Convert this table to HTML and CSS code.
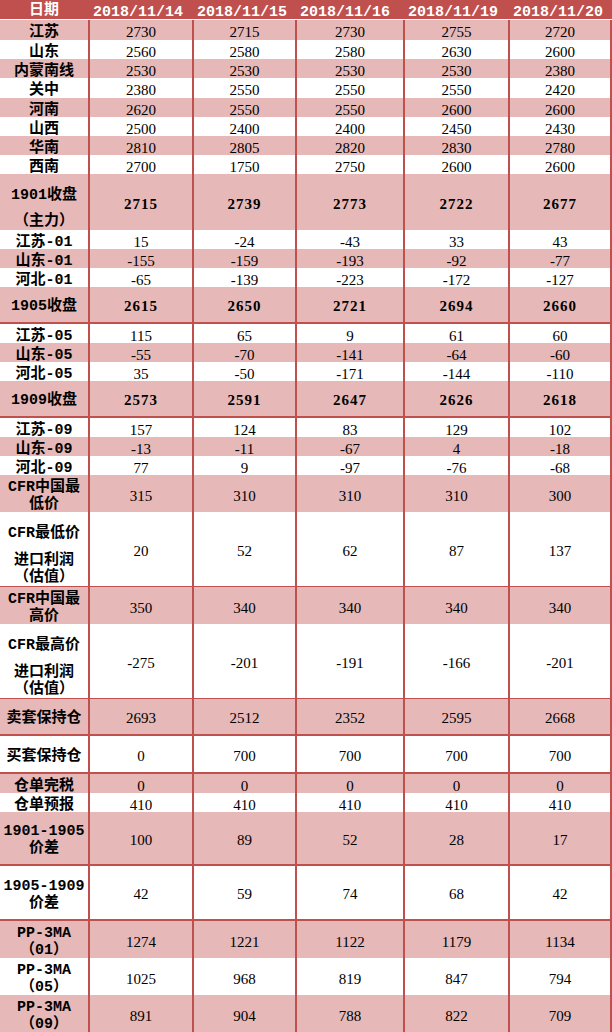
FILE: index.html
```html
<!DOCTYPE html>
<html lang="zh-CN">
<head>
<meta charset="utf-8">
<title>价差表</title>
<link rel="stylesheet" href="styles.css">
</head>
<body>
<div class="sheet">
  <div class="head">
    <div class="hc first">日期</div>
    <div class="hc">2018/11/14</div>
    <div class="hc">2018/11/15</div>
    <div class="hc">2018/11/16</div>
    <div class="hc">2018/11/19</div>
    <div class="hc">2018/11/20</div>
  </div>
  <div class="body">
    <div class="row h18"><div class="lab">江苏</div><div class="num">2730</div><div class="num">2715</div><div class="num">2730</div><div class="num">2755</div><div class="num">2720</div></div>
    <div class="row h17"><div class="lab">山东</div><div class="num">2560</div><div class="num">2580</div><div class="num">2580</div><div class="num">2630</div><div class="num">2600</div></div>
    <div class="row h17"><div class="lab">内蒙南线</div><div class="num">2530</div><div class="num">2530</div><div class="num">2530</div><div class="num">2530</div><div class="num">2380</div></div>
    <div class="row h18"><div class="lab">关中</div><div class="num">2380</div><div class="num">2550</div><div class="num">2550</div><div class="num">2550</div><div class="num">2420</div></div>
    <div class="row h17"><div class="lab">河南</div><div class="num">2620</div><div class="num">2550</div><div class="num">2550</div><div class="num">2600</div><div class="num">2600</div></div>
    <div class="row h17"><div class="lab">山西</div><div class="num">2500</div><div class="num">2400</div><div class="num">2400</div><div class="num">2450</div><div class="num">2430</div></div>
    <div class="row h17"><div class="lab">华南</div><div class="num">2810</div><div class="num">2805</div><div class="num">2820</div><div class="num">2830</div><div class="num">2780</div></div>
    <div class="row h17"><div class="lab">西南</div><div class="num">2700</div><div class="num">1750</div><div class="num">2750</div><div class="num">2600</div><div class="num">2600</div></div>
    <div class="row h54"><div class="lab low"><span>1901收盘</span><span class="gap9">（主力）</span></div><div class="num b">2715</div><div class="num b">2739</div><div class="num b">2773</div><div class="num b">2722</div><div class="num b">2677</div></div>
    <div class="row h17"><div class="lab">江苏-01</div><div class="num">15</div><div class="num">-24</div><div class="num">-43</div><div class="num">33</div><div class="num">43</div></div>
    <div class="row h17"><div class="lab">山东-01</div><div class="num">-155</div><div class="num">-159</div><div class="num">-193</div><div class="num">-92</div><div class="num">-77</div></div>
    <div class="row h17"><div class="lab">河北-01</div><div class="num">-65</div><div class="num">-139</div><div class="num">-223</div><div class="num">-172</div><div class="num">-127</div></div>
    <div class="row h35"><div class="lab">1905收盘</div><div class="num b">2615</div><div class="num b">2650</div><div class="num b">2721</div><div class="num b">2694</div><div class="num b">2660</div></div>
    <div class="row h17"><div class="lab">江苏-05</div><div class="num">115</div><div class="num">65</div><div class="num">9</div><div class="num">61</div><div class="num">60</div></div>
    <div class="row h17"><div class="lab">山东-05</div><div class="num">-55</div><div class="num">-70</div><div class="num">-141</div><div class="num">-64</div><div class="num">-60</div></div>
    <div class="row h17"><div class="lab">河北-05</div><div class="num">35</div><div class="num">-50</div><div class="num">-171</div><div class="num">-144</div><div class="num">-110</div></div>
    <div class="row h35"><div class="lab">1909收盘</div><div class="num b">2573</div><div class="num b">2591</div><div class="num b">2647</div><div class="num b">2626</div><div class="num b">2618</div></div>
    <div class="row h17"><div class="lab">江苏-09</div><div class="num">157</div><div class="num">124</div><div class="num">83</div><div class="num">129</div><div class="num">102</div></div>
    <div class="row h17"><div class="lab">山东-09</div><div class="num">-13</div><div class="num">-11</div><div class="num">-67</div><div class="num">4</div><div class="num">-18</div></div>
    <div class="row h17"><div class="lab">河北-09</div><div class="num">77</div><div class="num">9</div><div class="num">-97</div><div class="num">-76</div><div class="num">-68</div></div>
    <div class="row h35"><div class="lab"><span>CFR中国最</span><span>低价</span></div><div class="num">315</div><div class="num">310</div><div class="num">310</div><div class="num">310</div><div class="num">300</div></div>
    <div class="row h73"><div class="lab low"><span>CFR最低价</span><span class="gap10">进口利润</span><span>（估值）</span></div><div class="num">20</div><div class="num">52</div><div class="num">62</div><div class="num">87</div><div class="num">137</div></div>
    <div class="row h35"><div class="lab"><span>CFR中国最</span><span>高价</span></div><div class="num">350</div><div class="num">340</div><div class="num">340</div><div class="num">340</div><div class="num">340</div></div>
    <div class="row h73"><div class="lab low"><span>CFR最高价</span><span class="gap10">进口利润</span><span>（估值）</span></div><div class="num">-275</div><div class="num">-201</div><div class="num">-191</div><div class="num">-166</div><div class="num">-201</div></div>
    <div class="row h35"><div class="lab">卖套保持仓</div><div class="num">2693</div><div class="num">2512</div><div class="num">2352</div><div class="num">2595</div><div class="num">2668</div></div>
    <div class="row h36"><div class="lab">买套保持仓</div><div class="num">0</div><div class="num">700</div><div class="num">700</div><div class="num">700</div><div class="num">700</div></div>
    <div class="row h17"><div class="lab">仓单完税</div><div class="num">0</div><div class="num">0</div><div class="num">0</div><div class="num">0</div><div class="num">0</div></div>
    <div class="row h17"><div class="lab">仓单预报</div><div class="num">410</div><div class="num">410</div><div class="num">410</div><div class="num">410</div><div class="num">410</div></div>
    <div class="row h52"><div class="lab"><span>1901-1905</span><span>价差</span></div><div class="num">100</div><div class="num">89</div><div class="num">52</div><div class="num">28</div><div class="num">17</div></div>
    <div class="row h53"><div class="lab"><span>1905-1909</span><span>价差</span></div><div class="num">42</div><div class="num">59</div><div class="num">74</div><div class="num">68</div><div class="num">42</div></div>
    <div class="row h35"><div class="lab"><span>PP-3MA</span><span>（01）</span></div><div class="num">1274</div><div class="num">1221</div><div class="num">1122</div><div class="num">1179</div><div class="num">1134</div></div>
    <div class="row h35"><div class="lab"><span>PP-3MA</span><span>（05）</span></div><div class="num">1025</div><div class="num">968</div><div class="num">819</div><div class="num">847</div><div class="num">794</div></div>
    <div class="row h35"><div class="lab"><span>PP-3MA</span><span>（09）</span></div><div class="num">891</div><div class="num">904</div><div class="num">788</div><div class="num">822</div><div class="num">709</div></div>
  </div>
</div>
</body>
</html>
```

FILE: styles.css
```css
html, body {
  margin: 0;
  padding: 0;
  background: #ffffff;
}

.sheet {
  width: 612px;
}

.head {
  display: grid;
  grid-template-columns: 88px 102px 101px 106px 103px 100px;
  column-gap: 2px;
  padding-right: 2px;
  height: 19px;
  background: #c0504d;
  border-bottom: 1px solid #ffffff;
  color: #ffffff;
  font: bold 15px/19px "Liberation Mono", "Noto Sans CJK SC", monospace;
  overflow: hidden;
}

.hc {
  padding: 3px 0 0 3px;
  white-space: nowrap;
}

.hc.first {
  padding-left: 0;
  padding-top: 1px;
  text-align: center;
}

.body {
  display: flex;
  flex-direction: column;
  gap: 2px;
  background: #c0504d;
  padding: 0 2px 2px 0;
}

.row {
  display: grid;
  grid-template-columns: 88px 102px 101px 106px 103px 100px;
  column-gap: 2px;
}

.row > div {
  background: #ffffff;
  display: flex;
  align-items: center;
  justify-content: center;
  text-align: center;
  color: #000000;
  white-space: nowrap;
  box-sizing: border-box;
  padding-top: 4px;
}

.row:nth-child(odd) > div {
  background: #e6b8b7;
}

.h17 { height: 17px; }
.h18 { height: 18px; }
.h35 { height: 35px; }
.h36 { height: 36px; }
.h52 { height: 52px; }
.h53 { height: 53px; }
.h54 { height: 54px; }
.h73 { height: 73px; }

.lab {
  flex-direction: column;
  font: bold 15px/17px "Liberation Mono", "Noto Sans CJK SC", monospace;
}

.lab span {
  display: block;
}

.lab .gap9 {
  margin-top: 9px;
}

.lab .gap10 {
  margin-top: 10px;
}

.row > .lab.low {
  padding-top: 13px;
}

.num {
  font: 15px/17px "Liberation Serif", serif;
}

.num.b {
  font-weight: bold;
  letter-spacing: 1px;
}
```
